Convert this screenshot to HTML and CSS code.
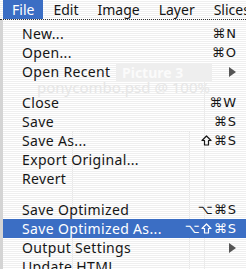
FILE: index.html
```html
<!DOCTYPE html>
<html lang="en">
<head>
    <meta charset="UTF-8">
    <title>File menu</title>
    <link rel="stylesheet" href="styles.css">
</head>
<body>
    <!-- document window showing faintly through the menu -->
    <div class="ghost">
        <span class="ghost-tab">Picture 3</span>
        <span class="ghost-title">ponycombo.psd @ 100%</span>
        <span class="ghost-frame"></span>
        <span class="ghost-rule"></span>
    </div>

    <div class="menubar">
        <div class="menubar-item active">File</div>
        <div class="menubar-item">Edit</div>
        <div class="menubar-item">Image</div>
        <div class="menubar-item">Layer</div>
        <div class="menubar-item">Slices</div>
    </div>

    <div class="menu">
        <div class="item"><span class="label">New...</span><span class="key">⌘N</span></div>
        <div class="item"><span class="label">Open...</span><span class="key">⌘O</span></div>
        <div class="item"><span class="label">Open Recent</span><span class="submenu"></span></div>
        <div class="separator"></div>
        <div class="item"><span class="label">Close</span><span class="key">⌘W</span></div>
        <div class="item"><span class="label">Save</span><span class="key">⌘S</span></div>
        <div class="item">
            <span class="label">Save As...</span>
            <span class="key"><svg class="shift" width="11" height="11" viewBox="0 0 11 11"><path d="M5.5 1 L10 5.5 H7.5 V10 H3.5 V5.5 H1 Z" fill="none" stroke="currentColor" stroke-width="1.2" stroke-linejoin="round"/></svg>⌘S</span>
        </div>
        <div class="item"><span class="label">Export Original...</span></div>
        <div class="item"><span class="label">Revert</span></div>
        <div class="separator"></div>
        <div class="item"><span class="label">Save Optimized</span><span class="key">⌥⌘S</span></div>
        <div class="item selected">
            <span class="label">Save Optimized As...</span>
            <span class="key">⌥<svg class="shift" width="11" height="11" viewBox="0 0 11 11"><path d="M5.5 1 L10 5.5 H7.5 V10 H3.5 V5.5 H1 Z" fill="none" stroke="currentColor" stroke-width="1.2" stroke-linejoin="round"/></svg>⌘S</span>
        </div>
        <div class="item"><span class="label">Output Settings</span><span class="submenu"></span></div>
        <div class="item"><span class="label">Update HTML</span></div>
    </div>
</body>
</html>
```
FILE: styles.css
```css
* {
    margin: 0;
    padding: 0;
    box-sizing: border-box;
}

body {
    font-family: 'Noto Sans', 'DejaVu Sans', sans-serif;
    font-size: 14px;
    color: #161616;
    background: repeating-linear-gradient(to bottom, #ffffff 0, #ffffff 1px, #efefef 1px, #efefef 2px);
    height: 100vh;
    overflow: hidden;
    position: relative;
}

/* faint window behind the translucent menu */
.ghost {
    position: absolute;
    inset: 0;
    pointer-events: none;
}

.ghost-tab,
.ghost-title,
.ghost-frame,
.ghost-rule {
    position: absolute;
    white-space: nowrap;
}

.ghost-tab {
    left: 116px;
    top: 64px;
    width: 96px;
    height: 17px;
    padding-left: 6px;
    background: #eeeeee;
    color: #fbfbfb;
    font-weight: bold;
    font-size: 14px;
    line-height: 17px;
}

.ghost-title {
    left: 37px;
    top: 82px;
    font-size: 15px;
    line-height: 11px;
    color: #e6e6e6;
}

.ghost-frame {
    left: 72px;
    top: 131px;
    width: 118px;
    height: 140px;
    border: 1px dotted #e8e8e8;
}

.ghost-rule {
    left: 204px;
    top: 82px;
    width: 1px;
    height: 190px;
    background: #ebebeb;
}

.menubar {
    position: relative;
    display: flex;
    height: 20px;
    padding-left: 3px;
    border-bottom: 1px dotted #333;
}

.menubar-item {
    height: 19px;
    line-height: 19px;
    padding: 0 9px;
}

.menubar-item + .menubar-item {
    margin-left: 1px;
}

.menubar-item.active {
    background: #3b6ec4;
    color: white;
}

.menu {
    position: relative;
    padding-top: 4px;
    border-left: 3px solid #d4d4d4;
}

.item {
    display: flex;
    align-items: center;
    justify-content: space-between;
    height: 19px;
    padding: 0 9px 0 19px;
}

.label {
    letter-spacing: 0.35px;
}

.item.selected {
    background: #3b6ec4;
    color: white;
}

.key {
    display: flex;
    align-items: center;
    font-family: 'DejaVu Sans', sans-serif;
    font-size: 13px;
    letter-spacing: 1px;
}

.shift {
    margin-right: 2px;
}

.submenu {
    width: 0;
    height: 0;
    border-top: 5px solid transparent;
    border-bottom: 5px solid transparent;
    border-left: 7px solid #555;
    margin-right: 1px;
}

.separator {
    height: 12px;
}
```
